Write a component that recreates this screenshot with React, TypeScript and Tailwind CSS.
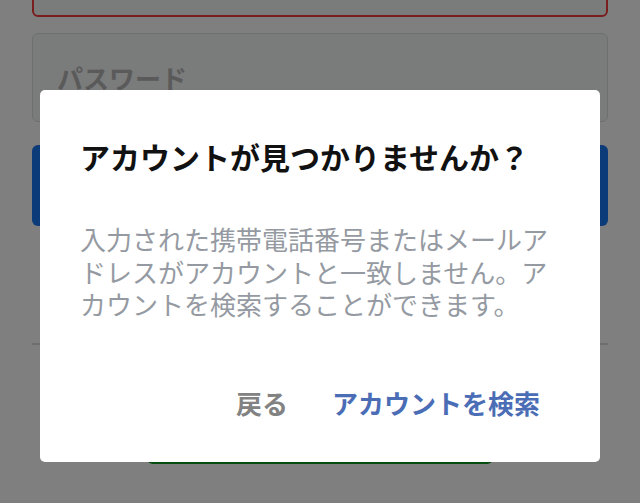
export default function App() {
  return (
    <div
      className="relative h-[503px] w-[640px] overflow-hidden bg-white"
      style={{ fontFamily: '"Noto Sans CJK JP", "Noto Sans", sans-serif' }}
    >
      {/* login page behind the dialog */}
      <div className="flex flex-col px-8">
        <div className="-mt-[60px] h-[77px] rounded-md border-2 border-[#f03c3c] bg-[#f5f6f7]" />
        <div className="mt-4 flex h-[89px] items-center rounded-md border border-[#dddfe2] bg-[#f5f6f7] pl-6">
          <span className="text-[26px] font-bold text-[#b4b4b4]">パスワード</span>
        </div>
        <div className="mt-[23px] h-[81px] rounded-md bg-[#1877f2]" />
        <div className="mt-[117px] h-[2px] bg-[#dadde1]" />
        <div className="mt-[71px] h-12 w-[346px] self-center rounded-md bg-[#0a9a1a]" />
      </div>

      {/* overlay + dialog */}
      <div className="absolute inset-0 flex items-start justify-center bg-black/50">
        <div className="mt-[90px] flex h-[372px] w-[560px] flex-col rounded-[5px] bg-white px-10 pt-12">
          <h2 className="text-[30px] font-bold leading-[36px] text-[#111]">
            アカウントが見つかりませんか？
          </h2>
          <p className="mt-[49px] text-[26px] leading-[32.5px] text-[#959aa2]">
            入力された携帯電話番号またはメールアドレスがアカウントと一致しません。アカウントを検索することができます。
          </p>
          <div className="mt-[66px] mr-5 flex justify-end gap-[44px] text-[26px] font-bold leading-8">
            <button className="text-[#828282]">戻る</button>
            <button className="text-[#4a6db5]">アカウントを検索</button>
          </div>
        </div>
      </div>
    </div>
  );
}
